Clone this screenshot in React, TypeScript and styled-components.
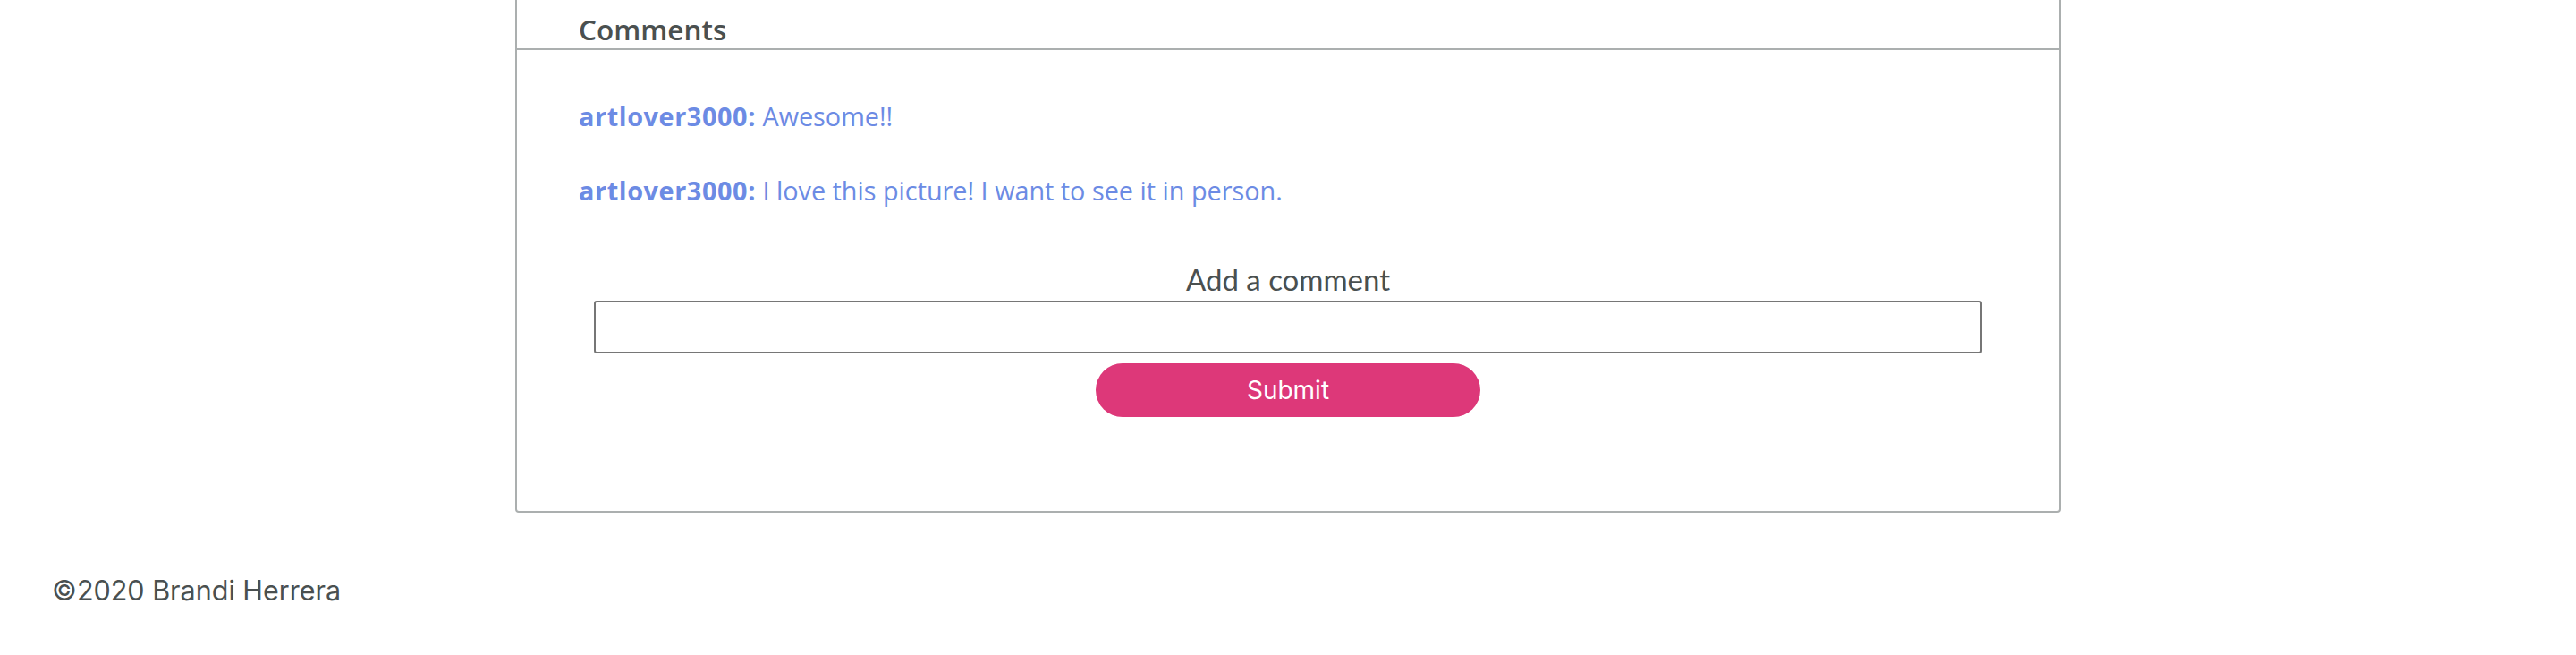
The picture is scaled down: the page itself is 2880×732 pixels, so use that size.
import React from "react";
import styled, { createGlobalStyle } from "styled-components";

const GlobalStyle = createGlobalStyle`
  html, body {
    margin: 0;
    padding: 0;
    background: #ffffff;
  }
  body {
    font-family: "Open Sans", "Noto Sans", sans-serif;
  }
  * { box-sizing: border-box; }
`;

const Page = styled.div`
  display: flex;
  flex-direction: column;
  width: 100%;
`;

const Card = styled.section`
  width: 60%;
  margin: -20px auto 0;
  border: 2px solid #abafaf;
  border-radius: 4px;
  background: #fff;
`;

const CardHeader = styled.header`
  height: 74px;
  padding: 35px 0 5px 69px;
  border-bottom: 2px solid #abafaf;
`;

const Title = styled.h2`
  margin: 0;
  font-family: "Open Sans", sans-serif;
  font-weight: 600;
  font-size: 31.5px;
  line-height: 32px;
  color: #4a5050;
`;

const CommentList = styled.div`
  display: flex;
  flex-direction: column;
  gap: 43px;
  padding: 54px 69px 0;
`;

const Comment = styled.p`
  margin: 0;
  font-family: "Open Sans", sans-serif;
  font-size: 28.8px;
  line-height: 40px;
  color: #6c8be4;
`;

const Author = styled.strong`
  font-weight: 700;
  letter-spacing: 0.6px;
`;

const Form = styled.form`
  display: flex;
  flex-direction: column;
  align-items: center;
  padding: 60px 0 105px;
`;

const Label = styled.label`
  font-family: Lato, "Open Sans", sans-serif;
  font-size: 33px;
  line-height: 39.6px;
  color: #4a5050;
  margin-bottom: 3px;
`;

const Input = styled.input`
  width: 90%;
  height: 59px;
  border: 2px solid #767676;
  border-radius: 3px;
  background: #fff;
  font-size: 28px;
  padding: 0 8px;
  outline: none;
`;

const SubmitButton = styled.button`
  margin-top: 11px;
  width: 430px;
  height: 60px;
  border: none;
  border-radius: 30px;
  background: #dd3879;
  color: #ffffff;
  font-family: Inter, Roboto, sans-serif;
  font-size: 28px;
  font-weight: 400;
  cursor: pointer;
`;

const Footer = styled.footer`
  padding: 69px 0 40px 58px;
  font-family: Inter, Roboto, sans-serif;
  font-size: 30.5px;
  line-height: 36px;
  color: #4a5050;
`;

const comments = [
  { author: "artlover3000", text: "Awesome!!" },
  { author: "artlover3000", text: "I love this picture! I want to see it in person." },
];

export default function App() {
  return (
    <Page>
      <GlobalStyle />
      <Card>
        <CardHeader>
          <Title>Comments</Title>
        </CardHeader>
        <CommentList>
          {comments.map((c, i) => (
            <Comment key={i}>
              <Author>{c.author}:</Author> {c.text}
            </Comment>
          ))}
        </CommentList>
        <Form onSubmit={(e) => e.preventDefault()}>
          <Label htmlFor="comment">Add a comment</Label>
          <Input id="comment" type="text" />
          <SubmitButton type="submit">Submit</SubmitButton>
        </Form>
      </Card>
      <Footer>©2020 Brandi Herrera</Footer>
    </Page>
  );
}
